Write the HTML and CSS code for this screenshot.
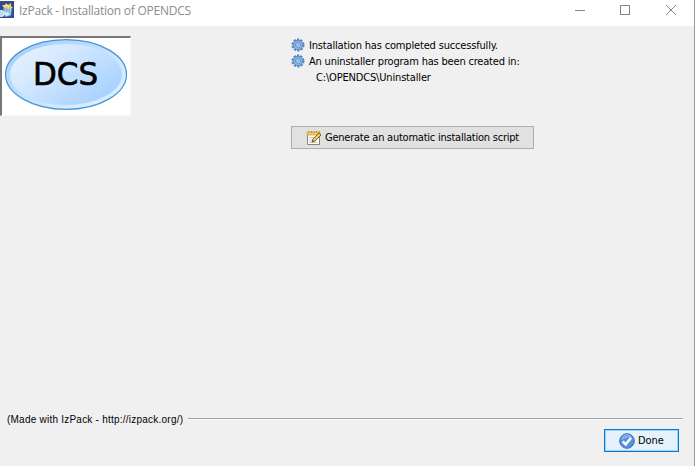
FILE: index.html
```html
<!DOCTYPE html>
<html lang="en">
<head>
<meta charset="utf-8">
<title>IzPack - Installation of OPENDCS</title>
<link rel="stylesheet" href="styles.css">
</head>
<body>
<svg class="defs" width="0" height="0" aria-hidden="true">
  <symbol id="gear" viewBox="0 0 14 14">
    <circle cx="7" cy="7" r="5.6" fill="none" stroke="#5084c0" stroke-width="1.8" stroke-dasharray="2.2 1.32"/>
    <circle cx="7" cy="7" r="4.7" fill="#8db5e4" stroke="#4f84c4" stroke-width="1"/>
    <circle cx="7" cy="7" r="2.6" fill="#b2cdec" stroke="#5d8fca" stroke-width=".8"/>
    <circle cx="7" cy="7" r="1.1" fill="#f0f0f0" stroke="#5d8fca" stroke-width=".6"/>
  </symbol>
</svg>
<div class="window">
  <header class="titlebar">
    <svg class="app-icon" width="14" height="17" viewBox="0 0 14 17">
      <rect width="14" height="17" fill="#334a91"/>
      <path d="M3 7l9 0-1 8-6 1z" fill="#68a9df"/>
      <path d="M5 8l1 6M8 8v6M10.5 8l-.6 6" stroke="#c9e7fa" stroke-width=".9"/>
      <path d="M2 4l3 0 1-2 2 2 3-2 0 3 2 2-4 1-5-1z" fill="#f3cc68"/>
      <path d="M4 5l3-1 2 2" stroke="#fff0b5" fill="none"/>
      <circle cx="1.5" cy="12.5" r="3" fill="#b9dcf7" stroke="#edf8ff"/>
      <circle cx="7" cy="13" r="2" fill="#d7edfb"/>
    </svg>
    <span class="title">IzPack - Installation of OPENDCS</span>
    <svg class="controls" width="110" height="21" viewBox="0 0 110 21" fill="none" stroke="#858585">
      <path d="M0 10.5h10"/>
      <rect x="45.5" y="5.5" width="9" height="9"/>
      <path d="M91 5l10 10M101 5l-10 10"/>
    </svg>
  </header>
  <main class="content">
    <div class="logo">
      <svg width="129" height="78" viewBox="0 0 129 78">
        <defs>
          <linearGradient id="rim" x1="0" y1="0" x2="1" y2="1"><stop offset="0" stop-color="#9ccbf8"/><stop offset=".5" stop-color="#c5e2ff"/><stop offset="1" stop-color="#e2f3ff"/></linearGradient>
          <linearGradient id="face" x1="0" y1="0" x2="1" y2=".75"><stop offset="0" stop-color="#e8f3ff"/><stop offset=".35" stop-color="#d8eaff"/><stop offset="1" stop-color="#a5d0ff"/></linearGradient>
        </defs>
        <ellipse cx="65" cy="36.5" rx="60.5" ry="34.8" fill="url(#rim)" stroke="#4793d6" stroke-width="1.2"/>
        <ellipse cx="65" cy="36.5" rx="56" ry="30.5" fill="url(#face)"/>
        <text class="logo-text" x="32" y="46.5" textLength="65" lengthAdjust="spacingAndGlyphs">DCS</text>
      </svg>
    </div>
    <section class="result">
      <p class="line"><svg width="14" height="14"><use href="#gear"/></svg><span class="done-text">Installation has completed successfully.</span></p>
      <p class="line"><svg width="14" height="14"><use href="#gear"/></svg><span class="created-text">An uninstaller program has been created in:</span></p>
      <p class="line path"><span>C:\OPENDCS\Uninstaller</span></p>
      <button class="generate">
        <svg width="16" height="16" viewBox="0 0 16 16">
          <path d="M1.5 3.5h12v11h-12z" fill="#fbfbf5" stroke="#858585"/>
          <path d="M1 2h13v3H1z" fill="#f0cc62" stroke="#c9a040" stroke-width=".7"/>
          <path d="M3 1v2M5.5 1v2M8 1v2M10.5 1v2M13 1v2" stroke="#a8873f" stroke-width=".7"/>
          <path d="M3 7.5h6M3 10h4M3 12.5h8" stroke="#c6cbd0"/>
          <path d="M6 12l1-3 6-6 2 2-6 6z" fill="#f0b83e" stroke="#785523" stroke-width=".9"/>
          <path d="M8 9.8l5.7-5.6" stroke="#ffe08a"/>
          <path d="M6 12l.4-1.3 1 .8z" fill="#333"/>
        </svg>
        <span>Generate an automatic installation script</span>
      </button>
    </section>
  </main>
  <footer class="footer">
    <div class="made"><span>(Made with IzPack - http://izpack.org/)</span><i class="rule"></i></div>
    <button class="done">
      <svg width="16" height="16" viewBox="0 0 16 16">
        <circle cx="8" cy="8" r="7.3" fill="#5a8ee0" stroke="#3c6cb9"/>
        <path d="M2 7a6 6 0 0 1 11-3Q8 4 2 7z" fill="#86afea"/>
        <path d="M3.7 8.3l3 3 5.4-6.5" fill="none" stroke="#fff" stroke-width="2.5"/>
      </svg>
      <span>Done</span>
    </button>
  </footer>
</div>
</body>
</html>
```
FILE: styles.css
```css
* { box-sizing: border-box; }
body { margin: 0; overflow: hidden; background: #f0f0f0; color: #000; font: 11px/16px "DejaVu Sans Condensed", "DejaVu Sans", sans-serif; }
p { margin: 0; }
svg { display: block; flex: none; }
.defs { position: absolute; }
button { display: flex; align-items: center; margin: 0; padding: 0; font: inherit; color: inherit; border-radius: 0; white-space: nowrap; }
.window { width: 695px; height: 466px; display: flex; flex-direction: column; border-right: 1px solid #999; }
.titlebar { height: 26px; background: #fff; display: flex; align-items: flex-start; }
.app-icon { margin-top: 1px; }
.title { margin: 2px 0 0 5px; font: 12px/17px "Open Sans", sans-serif; color: #8c8c8c; letter-spacing: -.24px; white-space: nowrap; }
.controls { margin-left: auto; margin-right: 9px; }
.content { flex: 1; display: flex; align-items: flex-start; padding-top: 10px; }
.logo { width: 131px; height: 80px; background: #fff; border: 1px solid #f8f8f8; border-top: 2px solid #777; border-left: 2px solid #777; overflow: hidden; }
.logo svg { margin-left: -1px; }
.logo-text { font: 32px "DejaVu Sans", sans-serif; stroke: #000; stroke-width: .7px; }
.result { margin-left: 160px; padding-top: 1px; }
.line { display: flex; align-items: center; height: 16px; gap: 4px; white-space: nowrap; }
.line span { padding-top: 1px; }
.done-text { letter-spacing: -.17px; }
.created-text { letter-spacing: -.19px; }
.path { padding-left: 25px; letter-spacing: -.17px; }
.generate { width: 243px; height: 23px; margin-top: 41px; padding-left: 14px; gap: 3px; background: #e1e1e1; border: 1px solid #adadad; letter-spacing: -.23px; }
.footer { height: 53px; }
.made { display: flex; align-items: flex-start; padding: 0 11px 0 7px; font: 10px/14px "Liberation Sans", sans-serif; height: 16px; white-space: nowrap; }
.made span { letter-spacing: .23px; }
.rule { flex: 1; margin: 5px 0 0 5px; height: 2px; background: #a0a5ab; border-bottom: 1px solid #f8f8f8; }
.done { width: 75px; height: 23px; margin: 0 15px 0 auto; padding-left: 14px; gap: 3px; background: #e5f1fb; border: 1px solid #0078d7; box-shadow: inset 0 0 0 1px #a9cfee; letter-spacing: -.1px; }
```
